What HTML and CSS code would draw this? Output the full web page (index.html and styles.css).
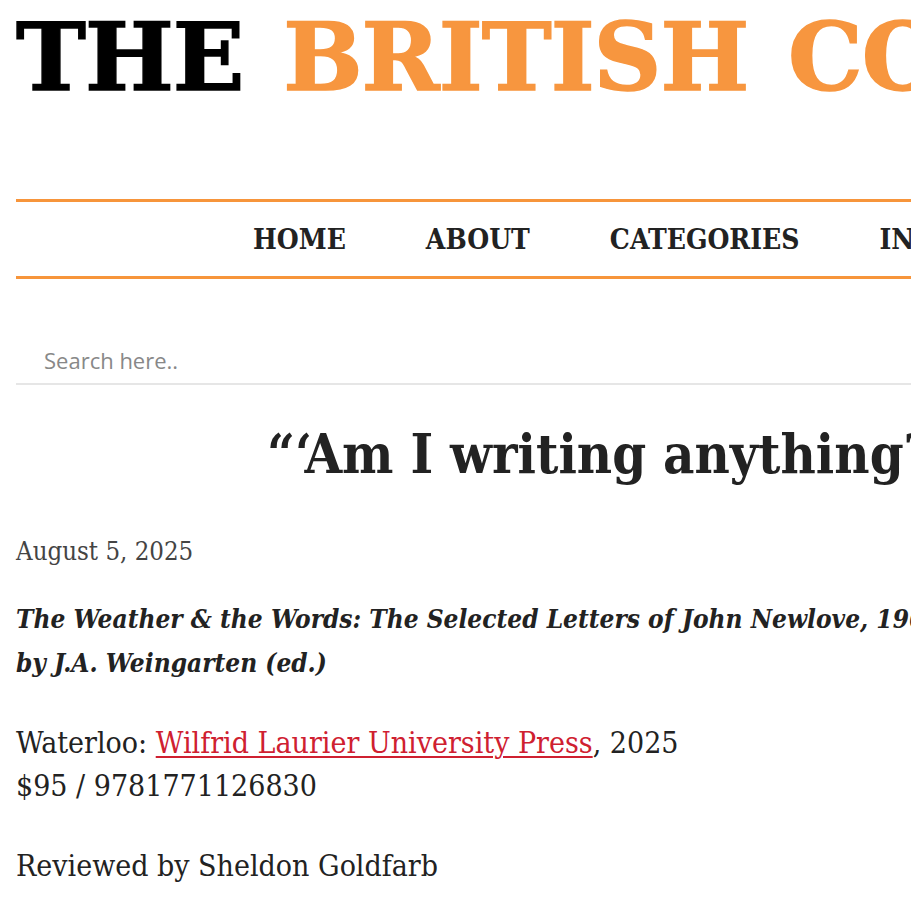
FILE: index.html
```html
<!DOCTYPE html>
<html lang="en">
<head>
<meta charset="utf-8">
<title>The British Columbia Review</title>
<link rel="stylesheet" href="styles.css">
</head>
<body>
<header class="site-header">
  <div class="logo"><span class="logo-dark">THE</span> <span class="logo-orange">BRITISH COLUMBIA REVIEW</span></div>
  <nav class="main-nav">
    <ul class="nav-list">
      <li><a class="nav-link" href="#">HOME</a></li>
      <li><a class="nav-link" href="#">ABOUT</a></li>
      <li><a class="nav-link" href="#">CATEGORIES</a></li>
      <li><a class="nav-link" href="#">INDEX</a></li>
      <li><a class="nav-link" href="#">CONTACT</a></li>
    </ul>
  </nav>
  <div class="search">
    <input type="text" class="search-input" placeholder="Search here..">
  </div>
</header>
<main class="article">
  <h1 class="title">“‘Am I writing anything?’”</h1>
  <p class="date">August 5, 2025</p>
  <p class="book">The Weather &amp; the Words: The Selected Letters of John Newlove, 1963–2003<br>by J.A. Weingarten (ed.)</p>
  <p class="pub">Waterloo: <a class="pub-link" href="#">Wilfrid Laurier University Press</a>, 2025<br>$95 / 9781771126830</p>
  <p class="byline">Reviewed by Sheldon Goldfarb</p>
</main>
</body>
</html>
```
FILE: styles.css
```css
html, body {
  margin: 0;
  overflow-x: hidden;
}
body {
  padding-left: 16px;
  background: #ffffff;
  color: #222222;
  font-family: "DejaVu Serif Condensed", "DejaVu Serif", serif;
  font-stretch: condensed;
}
.logo {
  box-sizing: border-box;
  height: 199px;
  padding-top: 10px;
  font-family: "DejaVu Serif", serif;
  font-stretch: normal;
  font-weight: bold;
  font-size: 94px;
  letter-spacing: -1px;
  word-spacing: 8px;
  line-height: 1;
  white-space: nowrap;
  -webkit-text-stroke: 1.5px currentColor;
}
.logo-dark { color: #000000; }
.logo-orange { color: #f7963f; }

.main-nav {
  box-sizing: border-box;
  height: 80px;
  border-top: 3px solid #f7953b;
  border-bottom: 3px solid #f7953b;
  display: flex;
  align-items: center;
}
.nav-list {
  list-style: none;
  margin: 0;
  padding: 0 0 0 237px;
  display: flex;
  gap: 80px;
  white-space: nowrap;
}
.nav-link {
  color: #222222;
  text-decoration: none;
  font-weight: bold;
  font-size: 28px;
}
.search {
  margin-top: 66px;
}
.search-input {
  display: block;
  box-sizing: border-box;
  width: 100%;
  height: 40px;
  margin: 0;
  padding: 0 0 8px 28px;
  border: none;
  border-bottom: 2px solid #e6e6e6;
  outline: none;
  font-family: "Open Sans", sans-serif;
  font-size: 22px;
  color: #888888;
  background: transparent;
}
.search-input::placeholder { color: #888888; }

.article { white-space: nowrap; }
.title {
  margin: 37px 0 0;
  padding-left: 251px;
  font-size: 54px;
  font-weight: bold;
  line-height: 1.2;
  color: #222222;
}
.date {
  margin: 44px 0 0;
  font-size: 25.6px;
  line-height: 41.6px;
  color: #444444;
}
.book {
  margin: 25px 0 0;
  font-size: 26px;
  line-height: 44px;
  font-style: italic;
  font-weight: bold;
}
.pub {
  margin: 36px 0 0;
  font-size: 30px;
  line-height: 43px;
}
.pub-link {
  color: #cf2030;
  text-decoration: underline;
  text-decoration-thickness: 2px;
  text-underline-offset: 3px;
}
.byline {
  margin: 37px 0 0;
  font-size: 30px;
  line-height: 43px;
}
```
